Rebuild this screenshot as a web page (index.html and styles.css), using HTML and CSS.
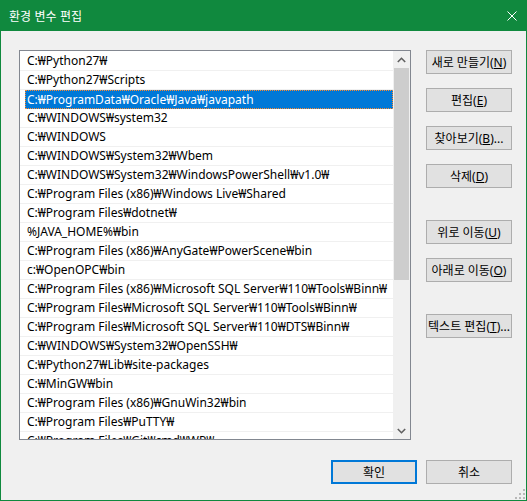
FILE: index.html
```html
<!DOCTYPE html>
<html lang="ko">
<head>
<meta charset="utf-8">
<title>환경 변수 편집</title>
<link rel="stylesheet" href="styles.css">
</head>
<body>
<div class="window">
  <div class="titlebar">
    <span class="title">환경 변수 편집</span>
    <svg class="close" width="10" height="10" viewBox="0 0 10 10"><path d="M0.5 0.5 L9.5 9.5 M9.5 0.5 L0.5 9.5" stroke="#fff" stroke-width="1" fill="none"/></svg>
  </div>
  <div class="client">
    <div class="top">
      <div class="listbox">
        <div class="rows">
          <div class="row">C:₩Python27₩</div>
          <div class="row">C:₩Python27₩Scripts</div>
          <div class="row sel"><div class="hl">C:₩ProgramData₩Oracle₩Java₩javapath</div></div>
          <div class="row">C:₩WINDOWS₩system32</div>
          <div class="row">C:₩WINDOWS</div>
          <div class="row">C:₩WINDOWS₩System32₩Wbem</div>
          <div class="row">C:₩WINDOWS₩System32₩WindowsPowerShell₩v1.0₩</div>
          <div class="row">C:₩Program Files (x86)₩Windows Live₩Shared</div>
          <div class="row">C:₩Program Files₩dotnet₩</div>
          <div class="row">%JAVA_HOME%₩bin</div>
          <div class="row">C:₩Program Files (x86)₩AnyGate₩PowerScene₩bin</div>
          <div class="row">c:₩OpenOPC₩bin</div>
          <div class="row">C:₩Program Files (x86)₩Microsoft SQL Server₩110₩Tools₩Binn₩</div>
          <div class="row">C:₩Program Files₩Microsoft SQL Server₩110₩Tools₩Binn₩</div>
          <div class="row">C:₩Program Files₩Microsoft SQL Server₩110₩DTS₩Binn₩</div>
          <div class="row">C:₩WINDOWS₩System32₩OpenSSH₩</div>
          <div class="row">C:₩Python27₩Lib₩site-packages</div>
          <div class="row">C:₩MinGW₩bin</div>
          <div class="row">C:₩Program Files (x86)₩GnuWin32₩bin</div>
          <div class="row">C:₩Program Files₩PuTTY₩</div>
          <div class="row">C:₩Program Files₩Git₩cmd₩WP₩</div>
        </div>
        <div class="scrollbar">
          <div class="arrow"><svg width="9" height="6" viewBox="0 0 9 6"><path d="M0.8 5 L4.5 1.3 L8.2 5" stroke="#606060" stroke-width="1.6" fill="none"/></svg></div>
          <div class="track"><div class="thumb"></div></div>
          <div class="arrow"><svg width="9" height="6" viewBox="0 0 9 6"><path d="M0.8 1 L4.5 4.7 L8.2 1" stroke="#606060" stroke-width="1.6" fill="none"/></svg></div>
        </div>
      </div>
      <div class="side">
        <div class="btn">새로 만들기(<u>N</u>)</div>
        <div class="btn">편집(<u>E</u>)</div>
        <div class="btn">찾아보기(<u>B</u>)...</div>
        <div class="btn">삭제(<u>D</u>)</div>
        <div class="btn gap">위로 이동(<u>U</u>)</div>
        <div class="btn">아래로 이동(<u>O</u>)</div>
        <div class="btn gap">텍스트 편집(<u>T</u>)...</div>
      </div>
    </div>
    <div class="bottom">
      <div class="btn default">확인</div>
      <div class="btn">취소</div>
    </div>
    <svg class="grip" width="10" height="10" viewBox="0 0 10 10" fill="#b8b8b8">
      <rect x="8" y="0" width="2" height="2"/>
      <rect x="4" y="4" width="2" height="2"/><rect x="8" y="4" width="2" height="2"/>
      <rect x="0" y="8" width="2" height="2"/><rect x="4" y="8" width="2" height="2"/><rect x="8" y="8" width="2" height="2"/>
    </svg>
  </div>
</div>
</body>
</html>
```
FILE: styles.css
```css
* { box-sizing: border-box; }
html, body { margin: 0; padding: 0; background: #f0f0f0; }
body {
  font-family: "Noto Sans", "Noto Sans CJK KR", sans-serif;
  font-size: 12px;
  color: #000;
}
.window {
  width: 527px;
  height: 501px;
  border: 1px solid #10893e;
  border-top: none;
  display: flex;
  flex-direction: column;
  background: #f0f0f0;
}
.titlebar {
  height: 31px;
  flex: none;
  margin: 0 -1px;
  background: #10893e;
  display: flex;
  align-items: center;
  padding: 0 10px 0 9px;
  color: #fff;
}
.title {
  flex: 1;
  font-family: "Noto Sans CJK KR", sans-serif;
  font-size: 12px;
  line-height: 1;
}
.close { display: block; }
.client {
  position: relative;
  flex: 1;
  padding: 19px 14px 0 18px;
}
.top { display: flex; }
.listbox {
  width: 392px;
  height: 390px;
  border: 1px solid #828790;
  background: #fff;
  display: flex;
  overflow: hidden;
}
.rows {
  flex: 1;
  padding-top: 1px;
  overflow: hidden;
}
.row {
  height: 19px;
  line-height: 18px;
  padding-left: 7px;
  border-bottom: 1px solid #f0f0f0;
  white-space: nowrap;
  overflow: hidden;
}
.row.sel {
  padding-left: 0;
  border-bottom: none;
}
.hl {
  margin-left: 5px;
  height: 19px;
  line-height: 17px;
  padding-left: 1px;
  background: #0078d7;
  color: #fff;
  border: 1px dotted #ff8a2e;
}
.scrollbar {
  width: 17px;
  flex: none;
  background: #f0f0f0;
  display: flex;
  flex-direction: column;
}
.arrow {
  height: 17px;
  flex: none;
  display: flex;
  align-items: center;
  justify-content: center;
}
.track { flex: 1; padding: 0 1px; }
.thumb { height: 212px; background: #cdcdcd; }
.side {
  margin-left: 15px;
  width: 86px;
  display: flex;
  flex-direction: column;
  gap: 14px;
}
.btn {
  width: 86px;
  height: 24px;
  background: #e1e1e1;
  border: 1px solid #adadad;
  display: flex;
  align-items: center;
  justify-content: center;
  white-space: nowrap;
  font-family: "Noto Sans", "Noto Sans CJK KR", sans-serif;
  font-size: 12px;
}
.btn u { text-decoration: underline; text-underline-offset: 1px; }
.side .gap { margin-top: 18px; }
.bottom {
  margin-top: 20px;
  display: flex;
  justify-content: flex-end;
  gap: 9px;
}
.btn.default { border: 2px solid #0078d7; }
.grip { position: absolute; right: 1px; bottom: 1px; }
```
